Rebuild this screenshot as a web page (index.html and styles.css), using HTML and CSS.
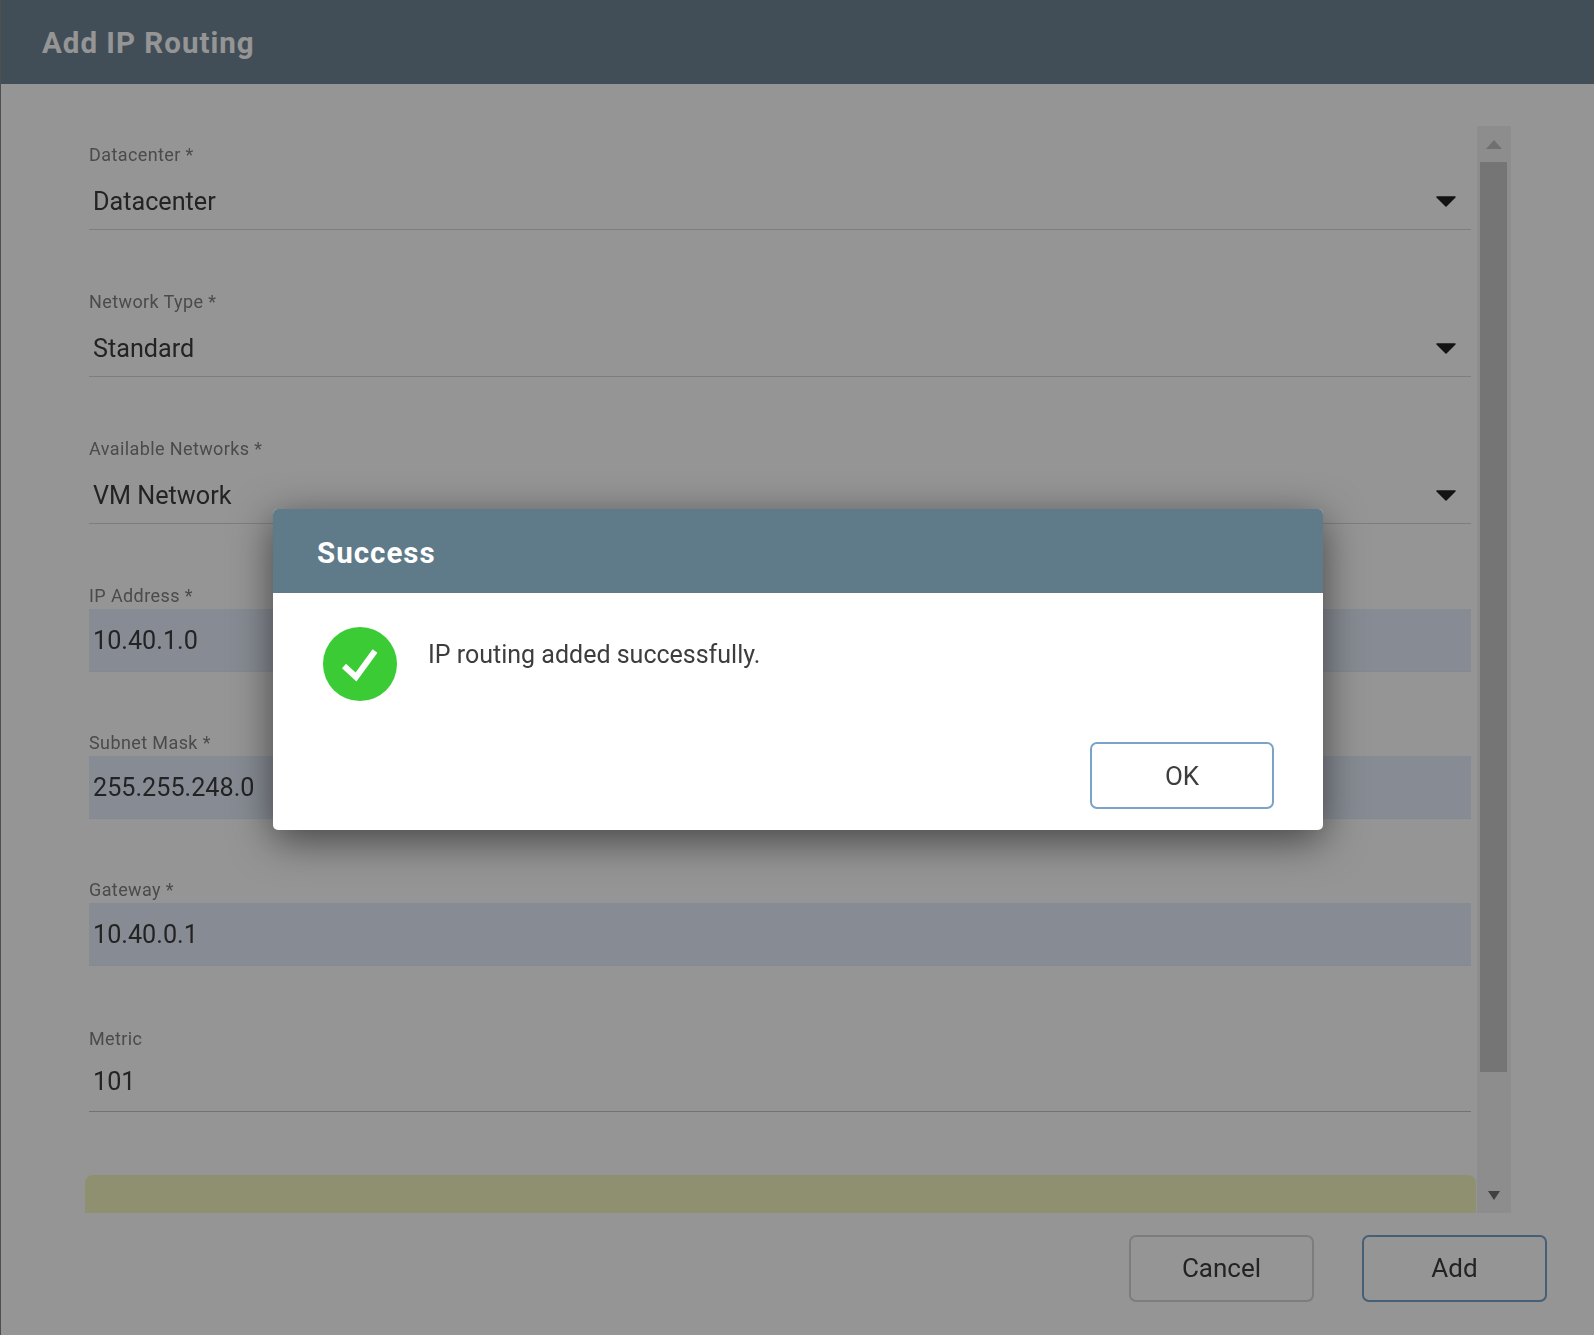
FILE: index.html
```html
<!DOCTYPE html>
<html lang="en">
<head>
    <meta charset="UTF-8">
    <meta name="viewport" content="width=device-width, initial-scale=1.0">
    <title>Add IP Routing</title>
    <link rel="stylesheet" href="styles.css">
</head>
<body>
    <div class="page">
        <div class="page-header">Add IP Routing</div>

        <div class="page-main">
            <form class="form-scroll">
                <div class="form-group">
                    <label>Datacenter *</label>
                    <div class="field">
                        <span>Datacenter</span>
                        <svg class="caret" viewBox="0 0 20 11"><path d="M1 1H19L10 10Z" fill="#222" stroke="#222" stroke-width="1.5" stroke-linejoin="round"/></svg>
                    </div>
                </div>
                <div class="form-group">
                    <label>Network Type *</label>
                    <div class="field">
                        <span>Standard</span>
                        <svg class="caret" viewBox="0 0 20 11"><path d="M1 1H19L10 10Z" fill="#222" stroke="#222" stroke-width="1.5" stroke-linejoin="round"/></svg>
                    </div>
                </div>
                <div class="form-group">
                    <label>Available Networks *</label>
                    <div class="field">
                        <span>VM Network</span>
                        <svg class="caret" viewBox="0 0 20 11"><path d="M1 1H19L10 10Z" fill="#222" stroke="#222" stroke-width="1.5" stroke-linejoin="round"/></svg>
                    </div>
                </div>
                <div class="form-group">
                    <label>IP Address *</label>
                    <div class="field filled"><span>10.40.1.0</span></div>
                </div>
                <div class="form-group">
                    <label>Subnet Mask *</label>
                    <div class="field filled"><span>255.255.248.0</span></div>
                </div>
                <div class="form-group">
                    <label>Gateway *</label>
                    <div class="field filled"><span>10.40.0.1</span></div>
                </div>
                <div class="form-group">
                    <label class="label-low">Metric</label>
                    <div class="field field-plain"><span>101</span></div>
                </div>
                <div class="note"></div>
            </form>

            <div class="scrollbar">
                <div class="scroll-btn">
                    <svg class="scroll-up" viewBox="0 0 16 9"><path d="M8 0L16 9H0Z" fill="#c0c0c0"/></svg>
                </div>
                <div class="scroll-thumb"></div>
                <div class="scroll-btn scroll-btn-down">
                    <svg class="scroll-down" viewBox="0 0 12 9"><path d="M0 0H12L6 9Z" fill="#707070"/></svg>
                </div>
            </div>
        </div>

        <div class="page-footer">
            <button type="button" class="btn">Cancel</button>
            <button type="button" class="btn btn-primary">Add</button>
        </div>
    </div>

    <div class="overlay">
        <div class="dialog">
            <div class="dialog-header">Success</div>
            <div class="dialog-body">
                <svg class="success-icon" viewBox="0 0 74 74">
                    <circle cx="37" cy="37" r="37" fill="#3bcb35"/>
                    <path d="M21 39L33 50L52 24" fill="none" stroke="#fff" stroke-width="6"/>
                </svg>
                <p class="dialog-text">IP routing added successfully.</p>
            </div>
            <div class="dialog-footer">
                <button type="button" class="btn btn-ok">OK</button>
            </div>
        </div>
    </div>
</body>
</html>
```

FILE: styles.css
```css
html, body {
    margin: 0;
    padding: 0;
    height: 1335px;
    overflow: hidden;
}

body {
    position: relative;
    background: #fff;
    font-family: Roboto, 'Liberation Sans', sans-serif;
    color: #333;
}

.page {
    height: 100%;
    border-left: 1px solid #888;
    box-sizing: border-box;
    filter: blur(0.5px);
}

.page-header {
    height: 84px;
    padding: 1px 0 0 41px;
    box-sizing: border-box;
    background: #6f8595;
    color: #fff;
    font-size: 29.5px;
    font-weight: 700;
    letter-spacing: 1px;
    line-height: 84px;
}

.page-main {
    display: flex;
    height: 1087px;
    margin-top: 42px;
    margin-left: 84px;
    width: 1426px;
}

.form-scroll {
    width: 1391px;
    margin-right: 1px;
    padding: 18px 5px 0 4px;
    box-sizing: border-box;
    overflow: hidden;
}

.form-group {
    height: 86px;
    margin-bottom: 61px;
}

label {
    display: block;
    height: 24px;
    font-size: 18px;
    letter-spacing: 0.4px;
    line-height: 22px;
    color: #808080;
}

.label-low {
    height: 22px;
    padding-top: 2px;
}

.field {
    display: flex;
    align-items: center;
    justify-content: space-between;
    height: 62px;
    padding: 6px 15px 0 4px;
    box-sizing: border-box;
    border-bottom: 1px solid #d8d8d8;
    font-size: 25.2px;
    color: #3d3d3d;
}

.field-plain {
    padding-top: 2px;
    border-bottom-color: #c4c4c4;
}

.filled {
    height: 63px;
    padding-top: 1px;
    border-bottom-color: #e4ecfa;
    background: #e8f0fe;
}

.caret {
    width: 20px;
    height: 11px;
}

.note {
    height: 60px;
    margin: 63px -5px 0 -4px;
    border-radius: 8px 8px 0 0;
    background: #f5f7c0;
}

.scrollbar {
    display: flex;
    flex-direction: column;
    align-items: center;
    width: 34px;
    background: #f1f1f1;
}

.scroll-btn {
    display: flex;
    align-items: center;
    justify-content: center;
    height: 36px;
    flex-shrink: 0;
}

.scroll-up {
    width: 16px;
    height: 9px;
}

.scroll-down {
    width: 12px;
    height: 9px;
}

.scroll-btn-down {
    margin-top: auto;
}

.scroll-thumb {
    width: 27px;
    height: 910px;
    margin-right: 2px;
    background: #c8c8c8;
}

.page-footer {
    display: flex;
    justify-content: flex-end;
    gap: 48px;
    margin-top: 22px;
    padding-right: 47px;
}

.btn {
    width: 185px;
    height: 67px;
    padding: 0 0 2px;
    border: 2px solid #d6d6d6;
    border-radius: 7px;
    background: #fff;
    font-family: inherit;
    font-size: 26px;
    color: #3d3d3d;
}

.btn-primary,
.btn-ok {
    border-color: #7aa3c9;
}

.btn-ok {
    width: 184px;
    padding: 0;
}

.overlay {
    position: absolute;
    inset: 0;
    display: flex;
    align-items: flex-start;
    justify-content: center;
    padding-left: 2px;
    background: rgba(0, 0, 0, 0.416);
}

.dialog {
    width: 1050px;
    height: 321px;
    margin-top: 509px;
    border-radius: 5px;
    overflow: hidden;
    background: #fff;
    box-shadow: 0 10px 40px rgba(0, 0, 0, 0.55);
    filter: blur(0.4px);
}

.dialog-header {
    height: 84px;
    padding: 2px 0 0 44px;
    box-sizing: border-box;
    background: #5f7a89;
    color: #fff;
    font-size: 29.5px;
    font-weight: 700;
    letter-spacing: 1px;
    line-height: 84px;
}

.dialog-body {
    display: flex;
    height: 149px;
    padding: 34px 0 0 50px;
    box-sizing: border-box;
}

.success-icon {
    width: 74px;
    height: 74px;
}

.dialog-text {
    margin: 12px 0 0 31px;
    font-size: 25px;
    line-height: 32px;
    color: #3d3d3d;
}

.dialog-footer {
    display: flex;
    justify-content: flex-end;
    padding-right: 49px;
}
```
